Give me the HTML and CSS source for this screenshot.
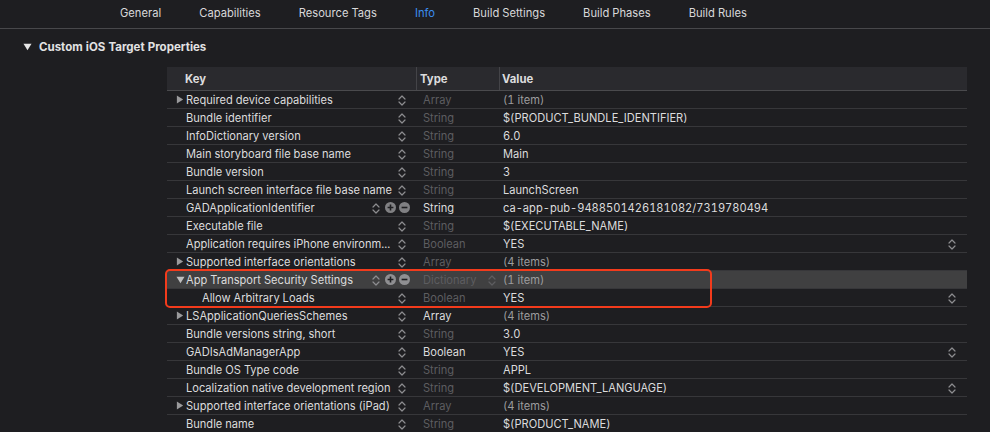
FILE: index.html
```html
<!DOCTYPE html>
<html>
<head>
<meta charset="utf-8">
<link rel="stylesheet" href="styles.css">
</head>
<body>
<svg width="0" height="0" class="defs">
  <defs>
    <symbol id="stepper" viewBox="0 0 8 11">
      <path d="M1 4 L4 1 L7 4 M1 7 L4 10 L7 7" fill="none" stroke="currentColor" stroke-width="1.2" stroke-linecap="round" stroke-linejoin="round"/>
    </symbol>
    <symbol id="plus" viewBox="0 0 11 11">
      <circle cx="5.5" cy="5.5" r="5.5" fill="currentColor"/>
      <path d="M5.5 2.6 V8.4 M2.6 5.5 H8.4" stroke="#1e1e21" stroke-width="1.6"/>
    </symbol>
    <symbol id="minus" viewBox="0 0 11 11">
      <circle cx="5.5" cy="5.5" r="5.5" fill="currentColor"/>
      <path d="M2.6 5.5 H8.4" stroke="#1e1e21" stroke-width="1.6"/>
    </symbol>
    <symbol id="tri-right" viewBox="0 0 8 10">
      <path d="M0.5 0.5 L7.5 5 L0.5 9.5 Z" fill="currentColor"/>
    </symbol>
    <symbol id="tri-down" viewBox="0 0 10 8">
      <path d="M0.5 0.5 L9.5 0.5 L5 7.5 Z" fill="currentColor"/>
    </symbol>
  </defs>
</svg>

<nav class="tabs">
  <span class="tab">General</span>
  <span class="tab">Capabilities</span>
  <span class="tab">Resource Tags</span>
  <span class="tab active">Info</span>
  <span class="tab">Build Settings</span>
  <span class="tab">Build Phases</span>
  <span class="tab">Build Rules</span>
</nav>

<section class="section">
  <h2 class="section-title"><svg class="section-tri"><use href="#tri-down"/></svg>Custom iOS Target Properties</h2>
</section>

<div class="table">
  <div class="row head">
    <div class="cell key"><span class="key-text">Key</span></div>
    <div class="cell type">Type</div>
    <div class="cell value">Value</div>
  </div>

  <div class="row">
    <div class="cell key"><svg class="disc"><use href="#tri-right"/></svg><span class="key-text">Required device capabilities</span><span class="ctrl"><svg class="step"><use href="#stepper"/></svg></span></div>
    <div class="cell type dim">Array</div>
    <div class="cell value count">(1 item)</div>
  </div>
  <div class="row">
    <div class="cell key"><span class="nodisc"></span><span class="key-text">Bundle identifier</span><span class="ctrl"><svg class="step"><use href="#stepper"/></svg></span></div>
    <div class="cell type dim">String</div>
    <div class="cell value">$(PRODUCT_BUNDLE_IDENTIFIER)</div>
  </div>
  <div class="row">
    <div class="cell key"><span class="nodisc"></span><span class="key-text">InfoDictionary version</span><span class="ctrl"><svg class="step"><use href="#stepper"/></svg></span></div>
    <div class="cell type dim">String</div>
    <div class="cell value">6.0</div>
  </div>
  <div class="row">
    <div class="cell key"><span class="nodisc"></span><span class="key-text">Main storyboard file base name</span><span class="ctrl"><svg class="step"><use href="#stepper"/></svg></span></div>
    <div class="cell type dim">String</div>
    <div class="cell value">Main</div>
  </div>
  <div class="row">
    <div class="cell key"><span class="nodisc"></span><span class="key-text">Bundle version</span><span class="ctrl"><svg class="step"><use href="#stepper"/></svg></span></div>
    <div class="cell type dim">String</div>
    <div class="cell value">3</div>
  </div>
  <div class="row">
    <div class="cell key"><span class="nodisc"></span><span class="key-text">Launch screen interface file base name</span><span class="ctrl"><svg class="step"><use href="#stepper"/></svg></span></div>
    <div class="cell type dim">String</div>
    <div class="cell value">LaunchScreen</div>
  </div>
  <div class="row">
    <div class="cell key"><span class="nodisc"></span><span class="key-text">GADApplicationIdentifier</span><span class="ctrl wide"><svg class="step"><use href="#stepper"/></svg><svg class="btn"><use href="#plus"/></svg><svg class="btn"><use href="#minus"/></svg></span></div>
    <div class="cell type">String</div>
    <div class="cell value">ca-app-pub-9488501426181082/7319780494</div>
  </div>
  <div class="row">
    <div class="cell key"><span class="nodisc"></span><span class="key-text">Executable file</span><span class="ctrl"><svg class="step"><use href="#stepper"/></svg></span></div>
    <div class="cell type dim">String</div>
    <div class="cell value">$(EXECUTABLE_NAME)</div>
  </div>
  <div class="row">
    <div class="cell key"><span class="nodisc"></span><span class="key-text">Application requires iPhone environm...</span><span class="ctrl"><svg class="step"><use href="#stepper"/></svg></span></div>
    <div class="cell type dim">Boolean</div>
    <div class="cell value"><span class="val-text">YES</span><svg class="step right"><use href="#stepper"/></svg></div>
  </div>
  <div class="row">
    <div class="cell key"><svg class="disc"><use href="#tri-right"/></svg><span class="key-text">Supported interface orientations</span><span class="ctrl"><svg class="step"><use href="#stepper"/></svg></span></div>
    <div class="cell type dim">Array</div>
    <div class="cell value count">(4 items)</div>
  </div>
  <div class="row selected">
    <div class="cell key"><svg class="disc open"><use href="#tri-down"/></svg><span class="key-text">App Transport Security Settings</span><span class="ctrl wide"><svg class="step"><use href="#stepper"/></svg><svg class="btn"><use href="#plus"/></svg><svg class="btn"><use href="#minus"/></svg></span></div>
    <div class="cell type dim"><span class="type-text">Dictionary</span><svg class="step"><use href="#stepper"/></svg></div>
    <div class="cell value count">(1 item)</div>
  </div>
  <div class="row">
    <div class="cell key child"><span class="nodisc"></span><span class="key-text">Allow Arbitrary Loads</span><span class="ctrl"><svg class="step"><use href="#stepper"/></svg></span></div>
    <div class="cell type dim">Boolean</div>
    <div class="cell value"><span class="val-text">YES</span><svg class="step right"><use href="#stepper"/></svg></div>
  </div>
  <div class="row">
    <div class="cell key"><svg class="disc"><use href="#tri-right"/></svg><span class="key-text">LSApplicationQueriesSchemes</span><span class="ctrl"><svg class="step"><use href="#stepper"/></svg></span></div>
    <div class="cell type">Array</div>
    <div class="cell value count">(4 items)</div>
  </div>
  <div class="row">
    <div class="cell key"><span class="nodisc"></span><span class="key-text">Bundle versions string, short</span><span class="ctrl"><svg class="step"><use href="#stepper"/></svg></span></div>
    <div class="cell type dim">String</div>
    <div class="cell value">3.0</div>
  </div>
  <div class="row">
    <div class="cell key"><span class="nodisc"></span><span class="key-text">GADIsAdManagerApp</span><span class="ctrl"><svg class="step"><use href="#stepper"/></svg></span></div>
    <div class="cell type">Boolean</div>
    <div class="cell value"><span class="val-text">YES</span><svg class="step right"><use href="#stepper"/></svg></div>
  </div>
  <div class="row">
    <div class="cell key"><span class="nodisc"></span><span class="key-text">Bundle OS Type code</span><span class="ctrl"><svg class="step"><use href="#stepper"/></svg></span></div>
    <div class="cell type dim">String</div>
    <div class="cell value">APPL</div>
  </div>
  <div class="row">
    <div class="cell key"><span class="nodisc"></span><span class="key-text">Localization native development region</span><span class="ctrl"><svg class="step"><use href="#stepper"/></svg></span></div>
    <div class="cell type dim">String</div>
    <div class="cell value"><span class="val-text">$(DEVELOPMENT_LANGUAGE)</span><svg class="step right"><use href="#stepper"/></svg></div>
  </div>
  <div class="row">
    <div class="cell key"><svg class="disc"><use href="#tri-right"/></svg><span class="key-text">Supported interface orientations (iPad)</span><span class="ctrl"><svg class="step"><use href="#stepper"/></svg></span></div>
    <div class="cell type dim">Array</div>
    <div class="cell value count">(4 items)</div>
  </div>
  <div class="row">
    <div class="cell key"><span class="nodisc"></span><span class="key-text">Bundle name</span><span class="ctrl"><svg class="step"><use href="#stepper"/></svg></span></div>
    <div class="cell type dim">String</div>
    <div class="cell value">$(PRODUCT_NAME)</div>
  </div>

  <div class="highlight-box"></div>
</div>
</body>
</html>
```

FILE: styles.css
```css
* { box-sizing: border-box; }

html, body {
  margin: 0;
  padding: 0;
  background: #1e1e21;
  color: #dcdcdd;
  font-family: "Inter", "Liberation Sans", sans-serif;
  font-size: 11.1px;
  font-variant-numeric: tabular-nums;
  overflow: hidden;
}

.defs { position: absolute; }

.tabs {
  display: flex;
  gap: 38px;
  height: 29px;
  padding-left: 120px;
  border-bottom: 1px solid #48484b;
  align-items: center;
  padding-bottom: 2px;
}

.tab {
  font-size: 11.2px;
  color: #d8d8d9;
}

.tab.active { color: #3b8ef0; }

.section {
  height: 38px;
  padding-top: 9px;
}

.section-title {
  margin: 0;
  display: flex;
  align-items: center;
  height: 18px;
  font-size: 11.5px;
  font-weight: 700;
  color: #e2e2e3;
  padding-left: 23px;
}

.section-tri {
  width: 9px;
  height: 8px;
  margin-right: 7px;
  color: #e6e6e6;
}

.table {
  position: relative;
  margin-left: 167px;
  width: 800px;
}

.row {
  display: grid;
  grid-template-columns: 249px 83px 1fr;
  height: 18px;
  border-bottom: 1px solid #37373a;
  align-items: center;
}

.row.head {
  height: 24px;
  background: #2a2a2e;
  border-bottom: 1px solid #4a4a4d;
  font-weight: 700;
  font-size: 11.3px;
  color: #e4e4e5;
}

.row.head .cell { height: 100%; display: flex; align-items: center; }
.row.head .key { padding-left: 18px; }
.row.head .type { border-left: 1px solid #444448; padding-left: 3px; }
.row.head .value { border-left: 1px solid #444448; padding-left: 2px; }

.row.selected { background: #404041; }

.cell {
  display: flex;
  align-items: center;
  min-width: 0;
  white-space: nowrap;
}

.key { padding-left: 9px; }
.key.child .nodisc { width: 26px; }

.disc {
  width: 8px;
  height: 9px;
  margin-right: 2px;
  color: #9a9a9c;
  flex: none;
}
.disc.open {
  width: 9px;
  height: 8px;
  margin-right: 1px;
  color: #bdbdbe;
}

.nodisc { width: 10px; flex: none; }

.key-text {
  flex: 1;
  min-width: 0;
  overflow: hidden;
  color: #dcdcdd;
}

.ctrl {
  display: flex;
  align-items: center;
  padding-right: 10px;
  flex: none;
}
.ctrl.wide { padding-right: 6px; }

.step {
  width: 8px;
  height: 11px;
  color: #8d8d90;
  flex: none;
  margin-top: 2px;
}

.btn {
  width: 11px;
  height: 11px;
  color: #808083;
  margin-left: 3px;
  flex: none;
}
.ctrl.wide .step { margin-right: 2px; }
.selected .btn { color: #8f8f92; }

.type { padding-left: 7px; color: #dcdcdd; }
.type.dim { color: #5d5d60; }
.type .type-text { flex: 1; }
.type .step { margin-right: 3px; color: #5d5d60; }

.value { padding-left: 4px; color: #dcdcdd; }
.value.count { color: #9c9c9e; }
.val-text { flex: 1; }
.step.right { margin-right: 11px; }

.highlight-box {
  position: absolute;
  left: -2px;
  top: 202px;
  width: 547px;
  height: 39px;
  border: 2.5px solid #f33b1c;
  border-radius: 5px;
  pointer-events: none;
}
```
